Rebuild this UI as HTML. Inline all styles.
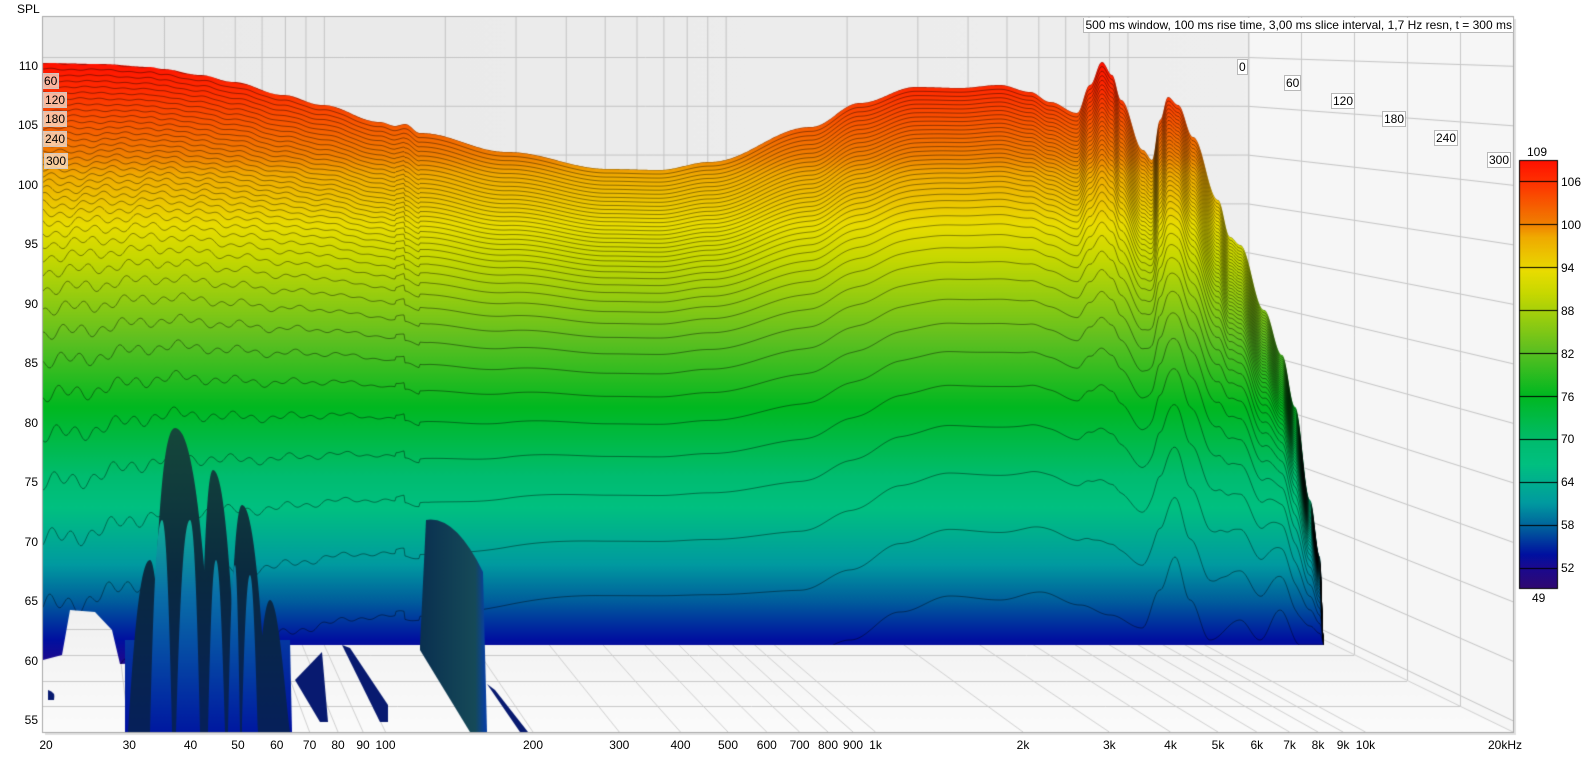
<!DOCTYPE html>
<html><head><meta charset="utf-8">
<style>
html,body{margin:0;padding:0;background:#fff;width:1590px;height:757px;overflow:hidden;position:relative;font-family:"Liberation Sans",sans-serif;font-size:12px;color:#000}
canvas{position:absolute;left:0;top:0}
.t{position:absolute;white-space:nowrap;line-height:14px}
.yl{position:absolute;right:1552px;text-align:right;line-height:14px}
.xl{position:absolute;top:738px;line-height:14px;transform:translateX(-50%)}
.bx{position:absolute;background:#fff;border:1px solid #b8b8b8;line-height:14px;padding:0 1px;font-size:12px}
.lb{position:absolute;background:rgba(255,230,210,0.75);border:1px solid rgba(200,200,200,0.8);line-height:14px;padding:0 1px}
.cb{position:absolute;left:1561px;line-height:14px}
</style></head><body>
<canvas id="c" width="1590" height="757"></canvas>
<div class="t" style="left:17px;top:2px">SPL</div>
<div class="yl" style="top:59px">110</div>
<div class="yl" style="top:118px">105</div>
<div class="yl" style="top:178px">100</div>
<div class="yl" style="top:237px">95</div>
<div class="yl" style="top:297px">90</div>
<div class="yl" style="top:356px">85</div>
<div class="yl" style="top:416px">80</div>
<div class="yl" style="top:475px">75</div>
<div class="yl" style="top:535px">70</div>
<div class="yl" style="top:594px">65</div>
<div class="yl" style="top:654px">60</div>
<div class="yl" style="top:713px">55</div>
<div id="xls"></div>
<div class="bx" style="right:77px;top:18px;border-top:none;border-right:none">500 ms window, 100 ms rise time, 3,00 ms slice interval, 1,7 Hz resn, t = 300 ms</div>
<div class="bx" style="left:1237px;top:59px">0</div>
<div class="bx" style="left:1284px;top:75px">60</div>
<div class="bx" style="left:1331px;top:93px">120</div>
<div class="bx" style="left:1382px;top:111px">180</div>
<div class="bx" style="left:1434px;top:130px">240</div>
<div class="bx" style="left:1487px;top:152px">300</div>
<div class="lb" style="left:43px;top:73px;padding-left:0">60</div>
<div class="lb" style="left:43px;top:92px">120</div>
<div class="lb" style="left:43px;top:111px">180</div>
<div class="lb" style="left:43px;top:131px">240</div>
<div class="lb" style="left:44px;top:153px">300</div>
<div class="t" style="left:1527px;top:145px">109</div>
<div class="cb" style="top:175px">106</div>
<div class="cb" style="top:218px">100</div>
<div class="cb" style="top:261px">94</div>
<div class="cb" style="top:304px">88</div>
<div class="cb" style="top:347px">82</div>
<div class="cb" style="top:390px">76</div>
<div class="cb" style="top:432px">70</div>
<div class="cb" style="top:475px">64</div>
<div class="cb" style="top:518px">58</div>
<div class="cb" style="top:561px">52</div>
<div class="t" style="left:1532px;top:591px">49</div>
<script>
const F=f=>43+490*Math.log10(f/20);
const xl=[[20,'20'],[30,'30'],[40,'40'],[50,'50'],[60,'60'],[70,'70'],[80,'80'],[90,'90'],[100,'100'],[200,'200'],[300,'300'],[400,'400'],[500,'500'],[600,'600'],[700,'700'],[800,'800'],[900,'900'],[1000,'1k'],[2000,'2k'],[3000,'3k'],[4000,'4k'],[5000,'5k'],[6000,'6k'],[7000,'7k'],[8000,'8k'],[9000,'9k'],[10000,'10k'],[20000,'20kHz']];
let h='';for(const [f,s] of xl){let x=F(f);if(f==20)x+=3;if(f==20000)x-=8;h+=`<div class="xl" style="left:${x}px">${s}</div>`;}
document.getElementById('xls').innerHTML=h;
const c=document.getElementById('c').getContext('2d');
let bg=c.createLinearGradient(43,0,1513,0);bg.addColorStop(0,'#e9e9e9');bg.addColorStop(0.8,'#eeeeee');bg.addColorStop(1,'#f8f8f8');
c.fillStyle=bg;c.fillRect(43,17,1470,715);
let fl=c.createLinearGradient(0,603,0,732);fl.addColorStop(0,'#f0f0f0');fl.addColorStop(1,'#fbfbfb');
c.fillStyle=fl;c.beginPath();c.moveTo(43,603);c.lineTo(1248,603);c.lineTo(1513,732);c.lineTo(43,732);c.fill();
c.fillStyle='#f6f6f6';c.beginPath();c.moveTo(1248,17);c.lineTo(1513,17);c.lineTo(1513,732);c.lineTo(1248,603);c.fill();
const freqs=[30,40,50,60,70,80,90,100,200,300,400,500,600,700,800,900,1000,2000,3000,4000,5000,6000,7000,8000,9000,10000,20000];
const U=f=>Math.log10(f/20)/3;
const yv=(v,s)=>17+(114.1-v)*11.9*s;
c.lineWidth=1;
c.strokeStyle='#c4c4c4';
for(const f of freqs){const xb=43+1470*U(f)*0.82;c.beginPath();c.moveTo(xb+.5,17);c.lineTo(xb+.5,603);c.stroke();}
for(let v=110;v>=55;v-=5){const yb=yv(v,0.82);c.beginPath();c.moveTo(43,yb+.5);c.lineTo(1248,yb+.5);c.lineTo(1513,yv(v,1)+.5);c.stroke();}
c.strokeStyle='#d0d0d0';
for(const f of freqs){const xb=43+1470*U(f)*0.82,xf=43+1470*U(f);c.beginPath();c.moveTo(xb,603);c.lineTo(xf,732);c.stroke();}
c.strokeStyle='#c8c8c8';
for(let i=0;i<=5;i++){const s=0.82+0.036*i;const x=43+1470*s,y=17+715*s;c.beginPath();c.moveTo(43,Math.round(y)+.5);c.lineTo(x,Math.round(y)+.5);c.stroke();c.beginPath();c.moveTo(Math.round(x)+.5,17);c.lineTo(Math.round(x)+.5,y);c.stroke();}
function grad(g){const st=[[0,'#ff1000'],[0.05,'#ff3000'],[0.15,'#f08000'],[0.18,'#f0aa00'],[0.26,'#e8dc00'],[0.31,'#c8d800'],[0.44,'#60c020'],[0.55,'#00b820'],[0.66,'#00bc70'],[0.71,'#00c080'],[0.80,'#009aa0'],[0.86,'#005c9c'],[0.92,'#0010a0'],[0.95,'#1a0a90'],[1,'#300870']];for(const [p,col] of st)g.addColorStop(p,col);return g;}
c.fillStyle=grad(c.createLinearGradient(0,160,0,589));c.fillRect(1519,160,39,429);
c.strokeStyle='#000';c.lineWidth=1;c.strokeRect(1519.5,160.5,38,428);
for(let v=106;v>=52;v-=6){const y=Math.round(160+(109-v)*7.15)+.5;c.beginPath();c.moveTo(1519,y);c.lineTo(1558,y);c.stroke();}
function mk(p){return x=>{if(x<=p[0][0])return p[0][1];for(let i=1;i<p.length;i++){if(x<=p[i][0]){const a=p[i-1],b=p[i];let t=(x-a[0])/(b[0]-a[0]);t=(1-Math.cos(Math.PI*t))/2;return a[1]+(b[1]-a[1])*t;}}return p[p.length-1][1];};}
const T=mk([[43,63],[100,64],[150,67],[162,69],[200,75],[233,82],[283,95],[322,105],[380,122],[395,126],[405,124],[420,133],[507,152],[608,169],[659,170],[710,162],[811,127],[860,103],[916,87],[960,88],[1000,85],[1030,92],[1050,102],[1077,113],[1090,85],[1102,62],[1112,75],[1121,100],[1143,150],[1152,160],[1160,120],[1168,97],[1178,105],[1193,137],[1218,200],[1230,237],[1240,245],[1264,310],[1282,355],[1295,407],[1310,500],[1320,557],[1324,645]]);
const B=mk([[43,780],[200,730],[400,690],[600,660],[700,660],[800,660],[850,640],[900,612],[950,596],[1000,600],[1040,592],[1080,605],[1110,615],[1142,628],[1160,590],[1175,557],[1190,600],[1210,640],[1240,620],[1260,640],[1280,610],[1300,645],[1330,645]]);
function surf(){c.beginPath();c.moveTo(43,63);for(let x=43;x<=1324;x+=1)c.lineTo(x,T(x));c.lineTo(1324,645);c.lineTo(280,645);c.lineTo(250,652);c.lineTo(240,662);c.lineTo(175,662);c.lineTo(120,664);c.lineTo(112,630);c.lineTo(95,612);c.lineTo(70,610);c.lineTo(62,655);c.lineTo(43,660);c.closePath();}
const sg=grad(c.createLinearGradient(0,62,0,690));
c.save();surf();c.fillStyle=sg;c.fill();c.clip();
const N=40;c.strokeStyle='rgba(0,0,0,0.6)';c.lineWidth=0.7;
for(let k=0;k<=N;k++){const r=k/N,g=0.33*r+0.67*Math.pow(r,8);c.beginPath();
for(let x=43;x<=1326;x+=1){let y=T(x)+(B(x)-T(x))*g;
if(x<430){const a=(1-(x-43)/400)*(1+12*r*r);y+=Math.sin(x*0.32+k*0.7)*a*0.6+Math.sin(x*0.11+k*0.3)*a*0.5;}
if(x>395&&x<420)y+=(x<405?-1:1)*4*r;
if(x==43)c.moveTo(x,y);else c.lineTo(x,y);}c.stroke();}
c.restore();
c.save();
let bl=c.createLinearGradient(0,560,0,732);bl.addColorStop(0,'#0a5aa0');bl.addColorStop(1,'#0010a0');
c.fillStyle=bl;c.beginPath();c.moveTo(125,640);c.lineTo(290,640);c.lineTo(292,732);c.lineTo(125,732);c.fill();
function ridge(x0,x1,xp,yp,col){c.beginPath();c.moveTo(x0,732);c.bezierCurveTo(x0+ (xp-x0)*0.3,yp+60,xp-(xp-x0)*0.4,yp,xp,yp);c.bezierCurveTo(xp+(x1-xp)*0.4,yp,x1-(x1-xp)*0.3,yp+80,x1,732);c.closePath();c.fillStyle=col;c.fill();}
const dk=c.createLinearGradient(0,420,0,732);dk.addColorStop(0,'#164a3a');dk.addColorStop(0.5,'#0a2a40');dk.addColorStop(1,'#06205a');
ridge(128,165,150,560,dk);ridge(150,215,175,428,dk);ridge(200,238,213,470,dk);ridge(228,268,242,505,dk);ridge(255,290,270,600,dk);
const lt=c.createLinearGradient(0,500,0,732);lt.addColorStop(0,'#10c090');lt.addColorStop(0.4,'#0a70a8');lt.addColorStop(1,'#0018a0');
ridge(150,172,162,520,lt);ridge(176,200,190,520,lt);ridge(208,225,216,560,lt);ridge(228,240,235,565,lt);ridge(242,258,250,575,lt);
const bk=c.createLinearGradient(420,0,485,0);bk.addColorStop(0,'#0a3050');bk.addColorStop(0.85,'#164a58');bk.addColorStop(1,'#0840a0');
c.fillStyle=bk;c.beginPath();c.moveTo(420,645);c.lineTo(426,520);c.quadraticCurveTo(455,515,483,572);c.lineTo(487,732);c.lineTo(470,732);c.lineTo(420,650);c.fill();
c.fillStyle='#081a70';
c.beginPath();c.moveTo(295,680);c.lineTo(322,652);c.lineTo(328,722);c.lineTo(320,722);c.closePath();c.fill();
c.beginPath();c.moveTo(342,645);c.lineTo(350,648);c.lineTo(388,705);c.lineTo(388,722);c.lineTo(380,722);c.closePath();c.fill();
c.beginPath();c.moveTo(487,684);c.lineTo(495,690);c.lineTo(528,732);c.lineTo(520,732);c.closePath();c.fill();
c.beginPath();c.moveTo(48,690);c.quadraticCurveTo(56,692,54,700);c.lineTo(48,700);c.fill();
c.restore();
c.strokeStyle='#a8a8a8';c.lineWidth=1;c.strokeRect(42.5,16.5,1471,716);
c.strokeStyle='rgba(0,0,0,0.12)';c.lineWidth=2;c.beginPath();c.moveTo(1515,19);c.lineTo(1515,734);c.lineTo(45,734);c.stroke();
</script>
</body></html>
